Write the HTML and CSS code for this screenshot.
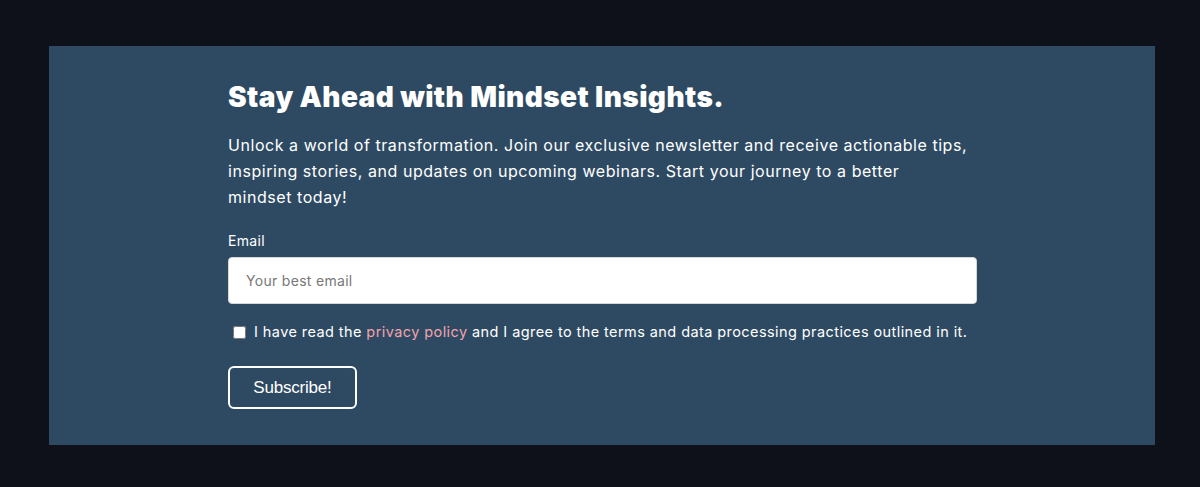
FILE: index.html
```html
<!DOCTYPE html>
<html lang="en">
<head>
<meta charset="utf-8">
<title>Stay Ahead with Mindset Insights</title>
<link rel="stylesheet" href="styles.css">
</head>
<body>
<section class="panel">
  <div class="content">
    <h2 class="title">Stay Ahead with Mindset Insights.</h2>
    <p class="lead">Unlock a world of transformation. Join our exclusive newsletter and receive actionable tips, inspiring stories, and updates on upcoming webinars. Start your journey to a better<br>mindset today!</p>
    <form class="form">
      <label class="label" for="email">Email</label>
      <input class="input" id="email" type="email" placeholder="Your best email">
      <label class="consent">
        <input class="check" type="checkbox">
        <span>I have read the <a class="link" href="#">privacy policy</a> and I agree to the terms and data processing practices outlined in it.</span>
      </label>
      <div class="actions">
        <button class="btn" type="button">Subscribe!</button>
      </div>
    </form>
  </div>
</section>
</body>
</html>
```
FILE: styles.css
```css
* { box-sizing: border-box; }
html, body { margin: 0; padding: 0; }
body {
  background: #0e1119;
  font-family: "Inter", "Noto Sans", sans-serif;
  color: #fff;
  padding: 46px 45px 42px 49px;
  height: 487px;
}
.panel {
  background: #2e4a62;
  height: 399px;
  padding: 33px 0 0 179px;
}
.content { width: 749px; }
.title {
  margin: 0;
  font-weight: 900;
  font-size: 28px;
  line-height: 36px;
  letter-spacing: 0.42px;
}
.lead {
  margin: 17px 0 0;
  font-size: 16px;
  line-height: 26px;
  font-weight: 400;
  letter-spacing: 0.55px;
  width: 760px;
}
.form { display: flex; flex-direction: column; margin-top: 21px; }
.label { font-size: 14px; line-height: 20px; letter-spacing: 0.3px; }
.input {
  margin-top: 6px;
  height: 47px;
  width: 749px;
  border: 1px solid #d7d7d7;
  border-radius: 4px;
  padding: 0 17px;
  font-family: inherit;
  font-size: 14px;
  letter-spacing: 0.3px;
  color: #333;
  background: #fff;
  outline: none;
}
.input::placeholder { color: #777; }
.consent {
  display: flex;
  align-items: center;
  gap: 8px;
  margin-top: 18px;
  font-size: 14.5px;
  line-height: 20px;
  letter-spacing: 0.42px;
  padding-left: 5px;
}
.check { margin: 0; width: 13px; height: 13px; }
.link { color: #f0a3ad; text-decoration: none; }
.actions { margin-top: 24px; display: flex; }
.btn {
  width: 129px;
  height: 43px;
  background: transparent;
  border: 2px solid #fff;
  border-radius: 6px;
  color: #fff;
  font-family: "Liberation Sans", Arial, sans-serif;
  font-size: 17px;
  letter-spacing: -0.2px;
  cursor: pointer;
}
```
